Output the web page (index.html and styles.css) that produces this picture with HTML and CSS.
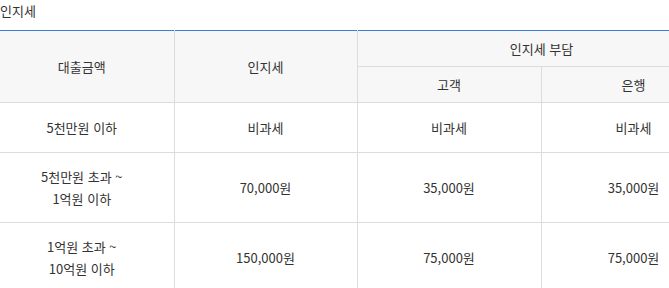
FILE: index.html
```html
<!DOCTYPE html>
<html lang="ko">
<head>
<meta charset="utf-8">
<link rel="stylesheet" href="styles.css">
</head>
<body>
<div class="page">
  <h3 class="title">인지세</h3>
  <div class="table-wrap">
    <table class="tax-table">
      <colgroup>
        <col class="c1"><col class="c2"><col class="c3"><col class="c4">
      </colgroup>
      <thead>
        <tr class="h1">
          <th rowspan="2">대출금액</th>
          <th rowspan="2">인지세</th>
          <th colspan="2">인지세 부담</th>
        </tr>
        <tr class="h2">
          <th>고객</th>
          <th>은행</th>
        </tr>
      </thead>
      <tbody>
        <tr class="r1">
          <td>5천만원 이하</td>
          <td>비과세</td>
          <td>비과세</td>
          <td>비과세</td>
        </tr>
        <tr class="r2">
          <td>5천만원 초과 ~<br>1억원 이하</td>
          <td>70,000원</td>
          <td>35,000원</td>
          <td>35,000원</td>
        </tr>
        <tr class="r2">
          <td>1억원 초과 ~<br>10억원 이하</td>
          <td>150,000원</td>
          <td>75,000원</td>
          <td>75,000원</td>
        </tr>
      </tbody>
    </table>
  </div>
</div>
</body>
</html>
```
FILE: styles.css
```css
html, body {
  margin: 0;
  padding: 0;
  background: #fff;
}
body {
  font-family: "Noto Sans CJK KR", "Noto Sans", sans-serif;
  color: #333;
  font-size: 13px;
}
.page {
  width: 669px;
  overflow: hidden;
}
.title {
  margin: 0;
  height: 30px;
  font-size: 13px;
  font-weight: normal;
  line-height: 22px;
  color: #333;
}
.table-wrap {
  margin-left: -10px;
}
.tax-table {
  border-collapse: collapse;
  table-layout: fixed;
  width: 736px;
  border-top: 1px solid #3b7fd9;
}
.c1 { width: 184px; }
.c2 { width: 183px; }
.c3 { width: 184px; }
.c4 { width: 185px; }
.tax-table th,
.tax-table td {
  border: 1px solid #dcdcdc;
  text-align: center;
  vertical-align: middle;
  padding: 0 10px;
  line-height: 22px;
  font-weight: normal;
}
.tax-table th {
  background: #f7f7f7;
}
.tax-table tr > :first-child { border-left: none; }
.tax-table thead tr:first-child th { border-top: none; }
.h1 th, .h2 th { height: 35px; padding: 0 10px; }
.r1 td { height: 49px; }
.r2 td { height: 69px; }
```
